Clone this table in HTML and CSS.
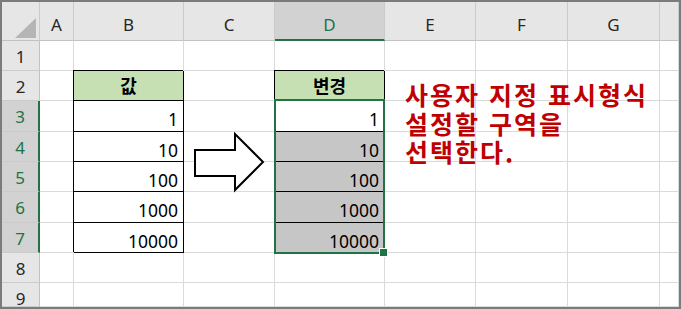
FILE: index.html
```html
<!DOCTYPE html>
<html lang="ko">
<head>
    <meta charset="UTF-8">
    <meta name="viewport" content="width=device-width, initial-scale=1.0">
    <title>사용자 지정 표시형식</title>
    <link rel="stylesheet" href="styles.css">
</head>
<body>
    <div class="sheet">
        <div class="grid">
            <!-- column headers -->
            <div class="hd corner"><span class="tri"></span></div>
            <div class="hd col">A</div>
            <div class="hd col">B</div>
            <div class="hd col">C</div>
            <div class="hd col active">D</div>
            <div class="hd col">E</div>
            <div class="hd col">F</div>
            <div class="hd col">G</div>
            <div class="hd col"></div>

            <!-- row 1 -->
            <div class="rh">1</div>
            <div class="c"></div><div class="c"></div><div class="c"></div><div class="c"></div>
            <div class="c"></div><div class="c"></div><div class="c"></div><div class="c"></div>

            <!-- row 2 -->
            <div class="rh">2</div>
            <div class="c"></div>
            <div class="c box title">값</div>
            <div class="c"></div>
            <div class="c box title">변경</div>
            <div class="c"></div><div class="c"></div><div class="c"></div><div class="c"></div>

            <!-- row 3 -->
            <div class="rh sel">3</div>
            <div class="c"></div>
            <div class="c box num">1</div>
            <div class="c"></div>
            <div class="c box num">1</div>
            <div class="c"></div><div class="c"></div><div class="c"></div><div class="c"></div>

            <!-- row 4 -->
            <div class="rh sel">4</div>
            <div class="c"></div>
            <div class="c box num">10</div>
            <div class="c"></div>
            <div class="c box num shade">10</div>
            <div class="c"></div><div class="c"></div><div class="c"></div><div class="c"></div>

            <!-- row 5 -->
            <div class="rh sel">5</div>
            <div class="c"></div>
            <div class="c box num">100</div>
            <div class="c"></div>
            <div class="c box num shade">100</div>
            <div class="c"></div><div class="c"></div><div class="c"></div><div class="c"></div>

            <!-- row 6 -->
            <div class="rh sel">6</div>
            <div class="c"></div>
            <div class="c box num">1000</div>
            <div class="c"></div>
            <div class="c box num shade">1000</div>
            <div class="c"></div><div class="c"></div><div class="c"></div><div class="c"></div>

            <!-- row 7 -->
            <div class="rh sel">7</div>
            <div class="c"></div>
            <div class="c box num">10000</div>
            <div class="c"></div>
            <div class="c box num shade">10000</div>
            <div class="c"></div><div class="c"></div><div class="c"></div><div class="c"></div>

            <!-- row 8 -->
            <div class="rh">8</div>
            <div class="c"></div><div class="c"></div><div class="c"></div><div class="c"></div>
            <div class="c"></div><div class="c"></div><div class="c"></div><div class="c"></div>

            <!-- row 9 -->
            <div class="rh">9</div>
            <div class="c"></div><div class="c"></div><div class="c"></div><div class="c"></div>
            <div class="c"></div><div class="c"></div><div class="c"></div><div class="c"></div>

            <!-- selected range D3:D7 -->
            <div class="selection"></div>
        </div>

        <svg class="arrow" width="72" height="62" viewBox="0 0 72 62">
            <polygon points="1,18 41,18 41,2 69,30 41,58 41,44 1,44"
                     fill="#fff" stroke="#000" stroke-width="2" stroke-linejoin="miter"/>
        </svg>

        <div class="note">
            사용자 지정 표시형식<br>
            설정할 구역을<br>
            선택한다.
        </div>
    </div>
</body>
</html>
```

FILE: styles.css
```css
* {
    box-sizing: border-box;
}
body {
    margin: 0;
    background: #fff;
    font-family: "Noto Sans", "Noto Sans CJK KR", sans-serif;
}
.sheet {
    position: relative;
    width: 681px;
    height: 309px;
    border: 2px solid #7b7b7b;
    overflow: hidden;
    background: #fff;
}
.grid {
    position: relative;
    display: grid;
    grid-template-columns: 38px 34px 110px 91px 110px 91px 92px 92px 19px;
    grid-template-rows: 39px 30px 30px 31px 30px 30px 31px 30px 30px 24px;
}

/* headers */
.hd {
    background: #e6e6e6;
    border-right: 1px solid #cbcbcb;
    border-bottom: 1px solid #c2c2c2;
    color: #262626;
    font-size: 17px;
    line-height: 20px;
    text-align: center;
    padding-top: 13px;
}
.hd.active {
    background: #d2d2d2;
    color: #217346;
    border-bottom: 2px solid #217346;
}
.corner {
    display: flex;
    justify-content: flex-end;
    align-items: flex-end;
    padding: 0 3px 2px 0;
}
.tri {
    width: 21px;
    height: 20px;
    background: #b5b5b5;
    clip-path: polygon(100% 0, 100% 100%, 0 100%);
}
.rh {
    background: #e6e6e6;
    border-right: 1px solid #c2c2c2;
    border-bottom: 1px solid #cbcbcb;
    color: #262626;
    font-size: 17px;
    line-height: 20px;
    text-align: center;
    padding-top: 6px;
}
.rh.sel {
    background: #d2d2d2;
    color: #217346;
    border-right: 2px solid #217346;
}

/* cells */
.c {
    border-right: 1px solid #dadada;
    border-bottom: 1px solid #dadada;
    font-size: 17.5px;
    line-height: 20px;
    color: #000;
}
.box {
    border-right-color: #000;
    border-bottom-color: #000;
    box-shadow: -1px -1px 0 #000;
}
.title {
    background: #c6e0b4;
    font-family: "Noto Sans CJK KR", sans-serif;
    font-weight: bold;
    font-size: 18px;
    text-align: center;
    padding-top: 4px;
}
.num {
    text-align: right;
    padding: 8px 5px 0 0;
}
.shade {
    background: #c6c6c6;
}

/* green frame drawn over D3:D7, with the fill handle */
.selection {
    position: absolute;
    grid-column: 5 / 6;
    grid-row: 4 / 9;
    top: -2px;
    left: -1px;
    right: 0;
    bottom: -1px;
    border: 2px solid #217346;
}
.selection::after {
    content: '';
    position: absolute;
    right: -5px;
    bottom: -5px;
    width: 7px;
    height: 7px;
    background: #217346;
    border: 1px solid #fff;
}

/* shapes floating over the sheet */
.arrow {
    position: absolute;
    left: 192px;
    top: 130px;
}
.note {
    position: absolute;
    left: 403px;
    top: 78px;
    font-family: "Noto Sans CJK KR", sans-serif;
    font-weight: bold;
    font-size: 25px;
    line-height: 28.5px;
    letter-spacing: 2px;
    color: #c00000;
    white-space: nowrap;
}
```
